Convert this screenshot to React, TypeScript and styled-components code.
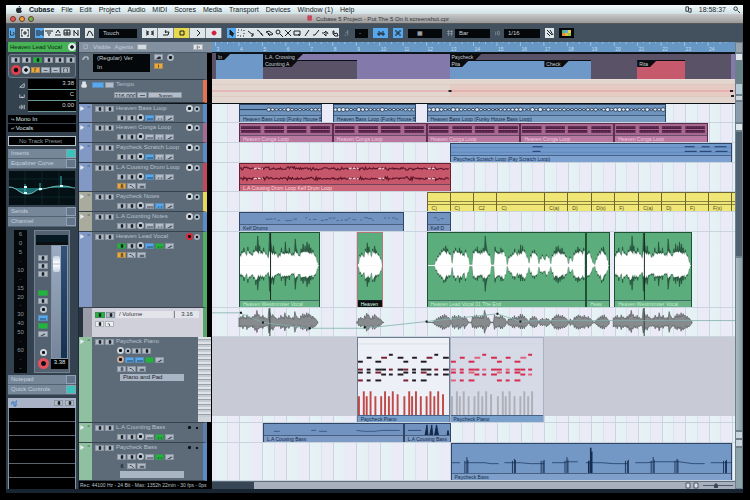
import React from "react";
import styled, { createGlobalStyle, css } from "styled-components";

/* ---------- palette ---------- */
const C = {
  slate: "#5d6b79",
  slateDark: "#43515f",
  key: "#b3bcc9",
  blue: "#7293bf",
  cyan: "#56a9ee",
  green: "#22b53c",
  clipGreen: "#5bad7c",
  red: "#c6576b",
  plum: "#a9698e",
  yellow: "#f0e676",
  ink: "#10161c",
};

const Global = createGlobalStyle`
  *, *::before, *::after { box-sizing: border-box; }
  body { margin: 0; background: #000; }
  body, button, input, select {
    font-family: "Liberation Sans", Arial, sans-serif;
    font-size: 6px;
    line-height: 7px;
  }
  button, input, select { margin: 0; padding: 0; border: 0; border-radius: 0; appearance: none; min-width: 0; }
  svg { display: block; }
`;

const Page = styled.div`
  min-height: 100vh;
  padding: 5px 7px 6px 6px;
  background: #000;
`;
const Win = styled.main`
  display: flex;
  flex-direction: column;
  background: #18242f;
  padding-bottom: 4px;
`;

/* ---------- menu bar and title ---------- */
const MenuBar = styled.nav`
  display: flex;
  align-items: center;
  gap: 7px;
  height: 9px;
  padding: 0 3px 0 10px;
  background: linear-gradient(#f4fafb, #cfe0e4);
  color: #20282c;
`;
const MenuItem = styled.button<{ $bold?: boolean }>`
  background: none;
  color: #14191c;
  font-size: 7px;
  line-height: 8px;
  font-weight: ${(p) => (p.$bold ? 700 : 400)};
`;
const Clock = styled.time`
  font-size: 7px;
  line-height: 8px;
`;
const Grow = styled.span`
  flex: 1;
`;
const TitleBar = styled.header`
  display: flex;
  align-items: center;
  gap: 3px;
  height: 10px;
  padding: 0 24px 0 4px;
  background: linear-gradient(#c9c9c9, #9a9a9a);
  border-bottom: 1px solid #55595c;
`;
const Light = styled.button<{ $c: string }>`
  width: 6px;
  height: 6px;
  border-radius: 50%;
  border: 1px solid #6b3a30;
  background: ${(p) => p.$c};
`;
const Title = styled.h1`
  flex: 1;
  margin: 0;
  display: flex;
  justify-content: center;
  gap: 3px;
  font-size: 6px;
  line-height: 8px;
  font-weight: 400;
  color: #33363a;
`;

/* ---------- toolbar ---------- */
const Toolbar = styled.div`
  display: flex;
  align-items: center;
  gap: 5px;
  height: 18px;
  padding: 0 3px;
  background: ${C.slateDark};
`;
const Group = styled.div`
  display: flex;
  background: #dfe6ea;
`;
const Tool = styled.button<{ $w: number; $bg?: string; $edge?: boolean }>`
  flex: none;
  width: ${(p) => p.$w}px;
  height: 10px;
  display: grid;
  place-items: center;
  background: ${(p) => p.$bg || "#dfe6ea"};
  ${(p) => p.$edge && css`border-right: 1px solid #7b8790;`}
`;
const DarkSelect = styled.select<{ $w: number }>`
  flex: none;
  width: ${(p) => p.$w}px;
  height: 9px;
  padding-left: 4px;
  background: #05080b;
  color: #c4ccd2;
  font-size: 6px;
`;

/* ---------- body ---------- */
const Body = styled.div`
  display: flex;
  align-items: stretch;
`;
const Inspector = styled.aside`
  flex: none;
  width: 73px;
  padding: 0 2px;
  display: flex;
  flex-direction: column;
  background: #34424f;
  border-right: 1px solid #202c37;
`;
const InsName = styled.div`
  display: flex;
  align-items: center;
  justify-content: space-between;
  height: 10px;
  padding-left: 2px;
  background: #46b155;
  color: #0b2c12;
  white-space: nowrap;
`;
const Strip = styled.div`
  display: grid;
  gap: 2px;
  margin: 2px 0 1px;
  padding: 2px;
  border: 1px solid #6c7b8a;
  border-radius: 3px;
  background: #46545f;
`;
const Line = styled.div<{ $gap?: number }>`
  display: flex;
  align-items: center;
  gap: ${(p) => p.$gap ?? 2}px;
`;
const Meter3 = styled.div`
  display: grid;
  grid-template-columns: 20px 1fr;
  align-items: center;
  color: #cfd6dc;
`;
const MeterIcon = styled.span`
  justify-self: end;
  padding-right: 3px;
`;
const MeterVal = styled.output`
  display: block;
  height: 11px;
  padding: 1px 2px;
  background: #000;
  border-bottom: 1px solid #6a9a98;
  text-align: right;
`;
const Routing = styled.div`
  display: grid;
  gap: 1px;
  margin: 3px 0 4px;
`;
const RouteSelect = styled.select`
  width: 100%;
  height: 8px;
  padding-left: 3px;
  background: #000;
  color: #dbe0e4;
  font-size: 6px;
`;
const Preset = styled.select`
  width: 100%;
  height: 10px;
  margin-bottom: 3px;
  padding-left: 10px;
  background: #000;
  border: 1px solid #b9c3cc;
  color: #8d979f;
  font-size: 6px;
`;
const Section = styled.button<{ $on?: boolean }>`
  display: flex;
  align-items: center;
  justify-content: space-between;
  width: 100%;
  height: 10px;
  padding: 0 0 0 3px;
  background: #76879a;
  border-bottom: 1px solid #556372;
  color: #c5cfda;
  &::after {
    content: "";
    width: 10px;
    height: 9px;
    background: ${(p) => (p.$on ? "#39c3ba" : "#64758a")};
    border: 1px solid #8fa0b2;
  }
`;
const Eq = styled.div`
  height: 34px;
  margin: 2px 1px;
  background: #041014;
`;
const Channel = styled.div`
  display: grid;
  grid-template-columns: 13px 36px;
  grid-template-rows: 100%;
  gap: 7px;
  height: 143px;
  margin: 3px 0 2px 6px;
`;
const Scale = styled.div`
  display: flex;
  flex-direction: column;
  justify-content: space-around;
  align-items: center;
  background: #05080b;
  color: #8d969d;
`;
const ChanPanel = styled.div`
  display: grid;
  grid-template-columns: 14px 1fr;
  grid-template-rows: 10px 1fr 10px;
  gap: 0 1px;
  padding: 4px 1px 3px 1px;
  background: #536170;
  border: 1px solid #738292;
`;
const Pan = styled.div`
  grid-column: 1 / -1;
  background: #071a24;
  border-bottom: 3px solid #0b0f12;
`;
const Stack = styled.div`
  grid-row: 2 / 4;
  display: flex;
  flex-direction: column;
  align-items: center;
  gap: 2px;
  padding-top: 10px;
`;
const FaderWrap = styled.div`
  display: grid;
  grid-template-columns: 9px 1fr;
  grid-template-rows: 100%;
  min-height: 0;
  background: linear-gradient(#33527a, #16304f);
  border: 1px solid #8597ab;
`;
const Fader = styled.input`
  writing-mode: vertical-lr;
  direction: rtl;
  width: 9px;
  height: 100%;
  background: linear-gradient(#9dacc0, #75869c);
  &::-webkit-slider-thumb {
    appearance: none;
    width: 7px;
    height: 16px;
    background: linear-gradient(#c4d0e2, #fff 45%, #8fa0b8 50%, #fff 55%, #c4d0e2);
    border-radius: 2px;
  }
`;
const FaderVal = styled.output`
  grid-column: 2;
  background: #000;
  color: #dfe4e8;
  text-align: center;
`;
const NotesHead = styled.div`
  display: flex;
  align-items: center;
  gap: 2px;
  height: 10px;
  margin-top: 3px;
  padding: 0 2px;
  background: #aab4c6;
`;
const Slots = styled.div`
  flex: 1;
  display: grid;
  grid-auto-rows: 14px;
  background: #000;
  border: solid #8593a4;
  border-width: 0 1px;
`;
const Slot = styled.div`
  border-bottom: 1px solid #59636c;
`;

/* ---------- small shared keys ---------- */
const Key = styled.button<{ $bg?: string; $w?: number }>`
  flex: none;
  width: ${(p) => p.$w ?? 9}px;
  height: 6px;
  display: grid;
  place-items: center;
  background: ${(p) => p.$bg || C.key};
  border: 1px solid rgba(90, 103, 116, 0.45);
  color: ${C.ink};
  overflow: hidden;
`;
const Round = styled.button<{ $c?: string; $s?: number }>`
  flex: none;
  width: ${(p) => p.$s ?? 7}px;
  height: ${(p) => p.$s ?? 7}px;
  border-radius: 50%;
  background: radial-gradient(circle, #0c1116 25%, ${(p) => p.$c || "#aab5c0"} 38%);
`;

/* ---------- track list ---------- */
const TrackList = styled.section`
  flex: none;
  width: 133px;
  background: #000;
`;
const ListHead = styled.div`
  display: flex;
  align-items: center;
  gap: 4px;
  height: 11px;
  padding: 0 9px 0 4px;
  background: #8290a0;
  border-bottom: 1px solid #4c5966;
  color: #c3ccd5;
`;
const TrackRow = styled.div<{ $h: number; $edge: string }>`
  display: flex;
  height: ${(p) => p.$h}px;
  margin-right: 5px;
  background: ${C.slate};
  border-right: 4px solid ${(p) => p.$edge};
  border-bottom: 1px solid #36424e;
`;
const KindTab = styled.div<{ $c: string }>`
  flex: none;
  display: flex;
  justify-content: space-between;
  width: 13px;
  padding: 2px 1px;
  background: ${(p) => p.$c};
  color: #23303c;
`;
const TrackMain = styled.div`
  flex: 1;
  min-width: 0;
  display: flex;
  flex-direction: column;
  gap: 2px;
  padding: 1px 3px 0 3px;
`;
const TrackName = styled.span`
  flex: 1;
  overflow: hidden;
  white-space: nowrap;
  padding-left: 1px;
  color: #b6c0ca;
`;
const Indent = styled.div`
  display: flex;
  align-items: center;
  gap: 1px;
  height: 7px;
  padding-left: 22px;
`;
const Patch = styled.select`
  width: 64px;
  height: 7px;
  margin-left: 25px;
  padding-left: 3px;
  background: #a9b5c3;
  color: #1b242c;
  font-size: 6px;
`;
const AutoRow = styled.div<{ $h: number }>`
  display: flex;
  height: ${(p) => p.$h}px;
  margin-right: 5px;
  padding-left: 4px;
  border-right: 4px solid #58a568;
  background: #26323f;
`;
const AutoMain = styled.div`
  flex: 1;
  display: flex;
  flex-direction: column;
  gap: 3px;
  padding: 3px 4px 0 3px;
  background: #cfd0da;
  border-left: 9px solid #9a9da8;
`;
const AutoSelect = styled.select`
  flex: 1;
  height: 7px;
  padding-left: 3px;
  background: #e4e5eb;
  color: #30363c;
  font-size: 6px;
`;
const AutoValue = styled.input`
  width: 25px;
  height: 7px;
  background: #e4e5eb;
  border-left: 1px solid #888;
  text-align: center;
  color: #30363c;
  font-size: 6px;
`;
const Piano = styled.div`
  flex: none;
  width: 13px;
  margin-right: -8px;
  border-bottom: 5px solid #cfd3da;
  background: repeating-linear-gradient(#dfe3e8 0 2px, #9aa2ac 2px 3px, #c5cbd2 3px 5px);
`;
const Status = styled.footer`
  height: 8px;
  padding: 1px;
  overflow: hidden;
  white-space: nowrap;
  color: #b9c0c6;
  font-size: 5px;
`;
const GlobalRow = styled.div<{ $h: number; $edge: string }>`
  display: flex;
  gap: 4px;
  height: ${(p) => p.$h}px;
  margin-right: 5px;
  padding: 1px 3px 0 2px;
  background: ${C.slate};
  border-right: 4px solid ${(p) => p.$edge};
  border-bottom: 1px solid #2c3844;
  color: #b8c2cc;
`;
const Col = styled.div<{ $gap?: number }>`
  display: flex;
  flex-direction: column;
  gap: ${(p) => p.$gap ?? 3}px;
`;

/* ---------- timeline ---------- */
const Timeline = styled.section`
  flex: 1;
  min-width: 0;
  background: repeating-linear-gradient(
    90deg,
    #ccd5de 0.67%, #ccd5de 0.86%,
    #e6f2f5 0.86%, #e4f0f3 2.9%,
    #dbe4ec 2.9%, #dbe4ec 3.05%,
    #eaebf6 3.05%, #eaebf6 5.16%
  );
`;
const Ruler = styled.div`
  height: 11px;
  background: #6797c4;
  border-bottom: 1px solid #101820;
`;
const Arranger = styled.div`
  height: 27px;
  background: #5a5368;
  border-bottom: 1px solid #e8dcd8;
`;
const Tempo = styled.div`
  height: 23px;
  background: #e2d6cf;
`;
const Divider = styled.div`
  height: 1px;
  background: #0b1218;
`;
const Lane = styled.div<{ $h: number; $cols: string; $bg?: string }>`
  display: grid;
  grid-template-columns: ${(p) => p.$cols};
  height: ${(p) => p.$h}px;
  background: ${(p) => p.$bg || "none"};
  border-bottom: 1px solid #c9d4de;
`;
const AutoLane = styled.div`
  height: 29px;
  border-bottom: 1px solid #c9d4de;
`;
const Clip = styled.article<{ $col: number; $bg: string; $line?: string }>`
  grid-column: ${(p) => p.$col};
  min-width: 0;
  display: flex;
  flex-direction: column;
  background: ${(p) => p.$bg};
  border: 1px solid ${(p) => p.$line || "#2f4666"};
  border-bottom-width: 0;
  overflow: hidden;
`;
const ClipArt = styled.div`
  flex: 1;
  min-height: 0;
`;
const ClipName = styled.span<{ $c?: string; $bg?: string }>`
  flex: none;
  height: 7px;
  padding-left: 3px;
  overflow: hidden;
  white-space: nowrap;
  border-top: 1px solid rgba(20, 35, 60, 0.5);
  background: ${(p) => p.$bg || "rgba(255,255,255,0.08)"};
  color: ${(p) => p.$c || "#172a44"};
  font-size: 5px;
  line-height: 6px;
`;
const Chord = styled.div<{ $col: number }>`
  grid-column: ${(p) => p.$col};
  min-width: 0;
  overflow: hidden;
  background: ${C.yellow};
  border: solid #6c6630;
  border-width: 1px 0 0 1px;
`;
const ChordTop = styled.div`
  height: 12px;
  background: linear-gradient(transparent 8px, #8b853f 8px 9px, transparent 9px 11px, #8b853f 11px);
`;
const ChordName = styled.span`
  display: block;
  height: 6px;
  padding-left: 4px;
  font-size: 5px;
  line-height: 6px;
  color: #4e4a22;
`;
const MarkLane = styled.div<{ $cols: string; $h: number }>`
  display: grid;
  grid-template-columns: ${(p) => p.$cols};
  height: ${(p) => p.$h}px;
`;
const Mark = styled.div<{ $col: number; $bg: string; $plain?: boolean }>`
  grid-column: ${(p) => p.$col};
  min-width: 0;
  background: ${(p) => p.$bg};
  border-top: ${(p) => (p.$plain ? "0" : "1px solid #0c0f16")};
`;
const Flag = styled.span`
  display: block;
  width: fit-content;
  height: 6px;
  padding: 0 8px 0 2px;
  background: #0a0c10;
  clip-path: polygon(0 0, 100% 0, calc(100% - 6px) 100%, 0 100%);
  color: #c9ced6;
  font-size: 5px;
  line-height: 6px;
  white-space: nowrap;
`;
const HScroll = styled.div`
  display: flex;
  justify-content: flex-end;
  align-items: center;
  height: 8px;
  background: linear-gradient(90deg, #364654 0 8%, #a8b0be 8%);
  border-top: 1px solid #5f6e7d;
`;
const VScroll = styled.div`
  flex: none;
  display: flex;
  flex-direction: column;
  width: 8px;
  background: #51626f;
`;
const Thumb = styled.div<{ $h: number; $bg: string }>`
  height: ${(p) => p.$h}px;
  background: ${(p) => p.$bg};
  border: 1px solid #6f808d;
`;
const Rest = styled.div`
  flex: 1;
  background: linear-gradient(90deg, #a9bcc2, #8ba0a9);
  border: 1px solid #6f808d;
`;

/* ---------- timeline geometry ---------- */
const START = 212;
const SPAN = 524;

/* Fractional column template: a gap and a clip track for every range. */
function columns(ranges: number[][]): string {
  let at = START;
  const out: string[] = [];
  ranges.forEach(([s, e]) => {
    out.push(`minmax(0, ${s - at}fr)`, `minmax(0, ${e - s}fr)`);
    at = e;
  });
  out.push(`minmax(0, ${START + SPAN - at}fr)`);
  return out.join(" ");
}

function Art({ w, h, children }: { w: number; h: number; children: React.ReactNode }) {
  return (
    <svg width="100%" height="100%" viewBox={`0 0 ${w} ${h}`} preserveAspectRatio="none" aria-hidden="true">
      {children}
    </svg>
  );
}

const rnd = (i: number) => {
  const v = Math.sin(i * 127.1 + 11.7) * 43758.5453;
  return v - Math.floor(v);
};

/* Peaks sampled every two units. */
const VERSE = [12, 15, 18, 13, 19, 14, 12, 16, 20, 30, 20, 15, 18, 13, 10, 34, 18, 20, 14, 10, 12, 18, 14, 24, 15, 18, 12, 13, 27, 15, 11, 17, 22, 20, 24, 22, 18, 16, 11, 4];
const SHORT = [2, 11, 13, 10, 17, 23, 19, 11, 17, 20, 15, 12, 8, 1];
const LONG = [
  0, 0, 0, 1, 6, 10, 13, 16, 18, 20, 17, 13, 3, 15, 18, 15, 18, 15, 12, 16, 10, 1, 1, 15, 17, 19, 15, 16, 18, 30, 15, 12, 1, 1,
  19, 15, 14, 18, 16, 11, 1, 9, 11, 13, 17, 13, 16, 21, 20, 16, 10, 3, 11, 15, 16, 12, 2, 8, 11, 7, 11, 9, 2, 11, 15, 19, 20, 17, 18,
  14, 10, 2, 9, 5, 13, 16, 19, 17, 15, 18, 13, 15, 10, 3, 1, 7, 12, 15, 18, 19, 13, 6,
];

function wave(peaks: number[], mid: number, k: number, x0 = 0, low = 0.5): string {
  const up: string[] = [];
  const down: string[] = [];
  peaks.forEach((p, i) => {
    [0, 1].forEach((j) => {
      const x = x0 + i * 2 + j;
      const n = j ? low + 0.25 * rnd(i + p) : 1;
      up.push(`${x},${(mid - p * k * n).toFixed(1)}`);
      down.unshift(`${x},${(mid + p * k * n * (0.75 + 0.25 * rnd(i * 3))).toFixed(1)}`);
    });
  });
  return up.concat(down).join(" ");
}
const core = (peaks: number[]) => peaks.map((p, i) => Math.min(p * 0.85, 12 + 3 * rnd(i)));

function Vocal({ peaks, w, cut }: { peaks: number[]; w: number; cut?: number }) {
  return (
    <Art w={w} h={68}>
      <polygon points={wave(peaks, 33, 1)} fill="#2f6148" stroke="#1c3c2c" strokeWidth="0.5" />
      <polygon points={wave(core(peaks), 33, 1, 0, 0.75)} fill="#fff" stroke="#fff" strokeWidth="0.4" />
      <path d={`M0 33H${w}`} stroke="#f4f8f4" />
      {cut && <path d={`M${cut} 0V68`} stroke="#16251d" />}
    </Art>
  );
}

function LoopWave({ w, from = 0 }: { w: number; from?: number }) {
  const cells = [];
  for (let x = from; x < w; x += 4) {
    const r = rnd(x);
    cells.push(<ellipse key={x} cx={x + 1.5} cy={5.5} rx={1.2 + r} ry={1 + r * 1.4} fill="#dfe9f2" stroke="#182c48" strokeWidth="0.8" />);
  }
  return (
    <Art w={w} h={12}>
      <path d={`M0 5.5H${w}`} stroke="#182c48" strokeWidth="1" />
      {cells}
    </Art>
  );
}

function CongaWave() {
  return (
    <Art w={94} h={12}>
      {[0, 24, 47, 71].map((x) => (
        <g key={x}>
          <path d={`M${x + 1} 4h20M${x + 1} 8h20`} stroke="#4a1d40" strokeWidth="3" />
          <path d={`M${x + 1} 4h20M${x + 1} 8h20`} stroke="#8d4f78" strokeWidth="0.5" strokeDasharray="2 1" />
        </g>
      ))}
    </Art>
  );
}

function DrumWave() {
  const pts = (y: number) => {
    let d = `M0 ${y}`;
    for (let x = 1; x < 212; x += 1) d += `L${x} ${(y + (rnd(x * y) - 0.5) * (x % 24 < 8 ? 4 : 2)).toFixed(1)}`;
    return d;
  };
  return (
    <Art w={212} h={22}>
      {[5, 16].map((y) => (
        <g key={y} fill="none">
          <path d={pts(y)} stroke="#5c1528" strokeWidth="1.2" />
          <path d={`M14 ${y}h9M110 ${y}h10M140 ${y}h6M190 ${y}h8`} stroke="#f1c8cd" strokeWidth="1.5" strokeDasharray="3 1" />
        </g>
      ))}
    </Art>
  );
}

function MidiDots({ w, h, seed }: { w: number; h: number; seed: number }) {
  const marks = [];
  for (let x = Math.min(22, w / 4); x < w - 6; x += 4) {
    const r = rnd(x + seed);
    if (r > 0.25) marks.push(<path key={x} d={`M${x} ${h * (0.4 + 0.3 * rnd(x * 2 + seed))}h${1 + r * 3}`} stroke="#33517d" strokeWidth="0.7" />);
  }
  return <Art w={w} h={h}>{marks}</Art>;
}

const NOTES: number[][] = [
  [32, 17, 4], [9, 20, 5], [24, 20, 6], [41, 20, 6], [0, 24, 5], [18, 24, 6],
  [0, 32, 5], [9, 32, 4], [18, 32, 6], [24, 32, 5], [32, 32, 4], [41, 32, 6],
  [0, 35, 5], [9, 35, 4], [18, 35, 6], [24, 37, 5], [32, 37, 4], [41, 37, 6],
  [0, 43, 5], [9, 43, 4], [18, 43, 6],
];
const HITS: number[][] = [[1, 19], [6, 24], [9, 19], [13, 24], [18, 19], [24, 19], [28, 24], [32, 19], [36, 24], [41, 21]];

function PianoPart({ color, alt, bar, w, end }: { color: string; alt: string; bar: string; w: number; end: number }) {
  return (
    <Art w={w} h={78}>
      <path d={`M0 6H${w}`} stroke="#cfd2e0" strokeWidth="0.6" />
      {[0, 47].map((dx) => (
        <g key={dx}>
          {NOTES.filter((n) => n[0] + dx < end).map(([x, y, l], i) => (
            <rect key={i} x={x + dx} y={y - 1} width={l} height="2" fill={i % 4 === 2 ? alt : color} />
          ))}
          {HITS.filter((n) => n[0] + dx < end).map(([x, l]) => (
            <rect key={x} x={x + dx - 1} y={78 - l} width="2" height={l} fill={bar} />
          ))}
        </g>
      ))}
    </Art>
  );
}

function BassPart() {
  return (
    <Art w={282} h={31}>
      <path d="M0 20h8m5 0h20l6 1h8m6-1h16l10 1h14m8-1h12l4-1h10m8 1h16l12 1h14m8-1h12l8-1h24l14 2h12m6-1h18l16-2h12" stroke="#1d3a62" strokeWidth="0.8" fill="none" />
      {[15, 63, 92, 116, 140, 177, 203, 227, 276].map((x, i) => (
        <path key={x} d={`M${x} 31V${i === 4 ? 4 : 14 + (i % 3) * 2}M${x - 2} 31V18M${x + 1} 31V${i === 4 ? 8 : 17}`} stroke="#152c50" strokeWidth={i === 4 ? 1.6 : 0.9} />
      ))}
    </Art>
  );
}

/* ---------- composed pieces ---------- */
function Glyph({ d, fill, s = 8, c = "#1a2025" }: { d: string; fill?: boolean; s?: number; c?: string }) {
  return (
    <svg width={s} height={s} viewBox="0 0 8 8" fill={fill ? c : "none"} stroke={c} strokeWidth="1" aria-hidden="true">
      <path d={d} />
    </svg>
  );
}
const Pip = () => <Glyph s={4} fill d="M2 1h4v6H2z" />;

const VIEW_TOOLS = [
  ["Inspector", "M1 1v6M3 1v6M5 2v4M7 1v6"],
  ["Infoline", "M0 2h8M2 4h4M3 6h2"],
  ["Overview", "M1 6h6M2 4l2-3 2 3"],
  ["Pool", "M1 1h6v5H1zM1 4h6M4 1v5"],
  ["Mixer", "M2 1v6M2 2l4 4M6 1v6"],
];
const EDIT_TOOLS = [
  ["Object selection", "M2 1l4 4H4l1 2-1 0-1-2-1 1z"],
  ["Range", "M1 1h1M4 1h1M7 1v1M7 4v1M7 7h-1M4 7h-1M1 7v-1M1 4v-1"],
  ["Split", "M1 2l5 4M6 4v3H4"],
  ["Glue", "M1 1l2 1 3 4M5 4l2 3"],
  ["Erase", "M1 3l3-1 4 3-2 1zM3 5l2 2"],
  ["Zoom", "M5 5l3 3M1 3a2 2 0 1 0 4 0a2 2 0 1 0-4 0"],
  ["Mute", "M1 1l6 6M7 1L1 7"],
  ["Time warp", "M1 2h6v4H1zM5 5l2 2"],
  ["Draw", "M6 1L2 7"],
  ["Line", "M1 6l2 0 4-5"],
  ["Play", "M1 4h2l2-2v5L3 5M6 3l1 2"],
  ["Color", "M2 5V2h1v3l3-1 1 3H4z"],
];
const TRANSPORT: [string, string, string?, string?][] = [
  ["Locators", "M0 1v6M2 2v4l-1-2zM6 2v4l1-2zM8 1v6"],
  ["Cycle", "M1 6h5l1-3H3M4 1L3 3l1 1"],
  ["Stop", "M2 2h4v4H2z", "#e8da4c"],
  ["Start", "M3 1l3 3-3 3"],
  ["Record", "M4 2a2 2 0 1 0 0.1 0z", undefined, "#d31c3c"],
];

function TrackKeys({ on, blueAt = 0 }: { on?: boolean; blueAt?: number }) {
  return (
    <Indent>
      <Key aria-label="Read automation" $bg={on ? C.green : undefined}><Pip /></Key>
      <Key aria-label="Write automation"><Pip /></Key>
      <Round aria-label="Edit channel" $c="#b9c3cc" />
      <Key aria-label="Inserts" $bg={blueAt === 0 ? C.cyan : undefined}><Glyph s={6} d="M0 4h8" /></Key>
      <Key aria-label="Equalizer" $bg={on || blueAt === 2 ? C.green : blueAt === 1 ? C.cyan : undefined}><Glyph s={6} d="M1 4h2M5 4h2" /></Key>
      <Key aria-label="Sends"><Glyph s={6} d="M1 5h3V3h3" /></Key>
    </Indent>
  );
}

function ExtraKeys({ first = "#eda83c" }: { first?: string }) {
  return (
    <Indent>
      <Key aria-label="Musical timebase" $bg={first}><Glyph s={6} d="M3 6V1h2v5" /></Key>
      <Key aria-label="Lane display"><Glyph s={6} d="M1 2h2l4 4" /></Key>
      <Key aria-label="Freeze"><Glyph s={6} d="M1 3h6M1 5h6" /></Key>
    </Indent>
  );
}

function Track(p: {
  name: string; h: number; edge: string; tab: string; armed?: boolean; extra?: boolean; blueAt?: number; piano?: boolean; patch?: string; midi?: boolean;
}) {
  return (
    <TrackRow $h={p.h} $edge={p.edge}>
      <KindTab $c={p.tab}>
        <Glyph s={5} c="#e8eef4" fill d="M1 1l5 3-5 3z" />
        <Glyph s={4} d="M1 2h5" />
      </KindTab>
      <TrackMain>
        <Line $gap={1}>
          <Key aria-label={`Mute ${p.name}`}><Pip /></Key>
          <Key aria-label={`Solo ${p.name}`}><Pip /></Key>
          <TrackName>{p.name}</TrackName>
          {!p.piano && <Round aria-label={`Record ${p.name}`} $c={p.armed ? "#e0283a" : p.midi ? C.slate : "#ccd4db"} />}
          {!p.piano && <Round aria-label={`Monitor ${p.name}`} $s={6} $c={p.midi ? C.slate : "#a3b0bc"} />}
        </Line>
        {p.piano && (
          <Indent>
            <Round aria-label="Record Paycheck Piano" $c="#ccd4db" />
            <Round aria-label="Monitor Paycheck Piano" $s={6} />
            <Key aria-label="Read"><Pip /></Key>
            <Key aria-label="Write"><Pip /></Key>
          </Indent>
        )}
        {p.piano ? (
          <Indent>
            <Round aria-label="Edit instrument" $c="#c7a998" />
            <Key aria-label="Instrument" $bg={C.cyan}><Glyph s={6} d="M0 4h8" /></Key>
            <Key aria-label="Inserts" $bg={C.cyan}><Glyph s={6} d="M0 4h8" /></Key>
            <Key aria-label="Equalizer" $bg={C.green} />
            <Key aria-label="Sends"><Glyph s={6} d="M1 5h3V3h3" /></Key>
          </Indent>
        ) : (
          <TrackKeys on={p.armed} blueAt={p.blueAt} />
        )}
        {p.extra && <ExtraKeys first={p.midi ? C.slate : p.piano ? C.key : undefined} />}
        {p.patch !== undefined && (
          <Patch aria-label={`${p.name} program`}><option>{p.patch}</option></Patch>
        )}
      </TrackMain>
      {p.piano && <Piano />}
    </TrackRow>
  );
}

const TAB = { audio: "#8199c4", midi: "#8fc0a0", inst: "#a9ab9c" };
const CHORDS: [number, number, string][] = [
  [427, 450, "C)"], [450, 474, "C)"], [474, 497, "C2"], [497, 545, "C)"], [545, 568, "C(a)"], [568, 592, "D)"], [592, 615, "D(s)"],
  [615, 639, "F)"], [639, 662, "C(a)"], [662, 686, "D)"], [686, 709, "F)"], [709, 732, "F(s)"], [732, 736, ""],
];

function RulerMarks() {
  const items = [];
  for (let n = 3; n <= 24; n += 1) {
    const x = (n - 4) * 23.5 + 27;
    items.push(
      <g key={n}>
        <path d={`M${x} 0v4M${x + 6} 0v1M${x + 12} 0v2M${x + 18} 0v1`} stroke="#b7d3ea" strokeWidth="0.7" />
        <text x={x + 1} y="9" fontSize="5" fill="#c6def0">{n}</text>
      </g>,
    );
  }
  return <Art w={SPAN} h={10}>{items}</Art>;
}

const BASS: [number, number, number, string][] = [
  [239, 322, 28, "Heaven Bass Loop (Funky House B"],
  [333, 416, 0, "Heaven Bass Loop (Funky House B"],
  [427, 667, 0, "Heaven Bass Loop (Funky House Bass Loop)"],
];
const CONGA = [239, 333, 427, 521, 615];

export default function App() {
  return (
    <Page>
      <Global />
      <Win>
        <MenuBar aria-label="Main menu">
          <svg width="6" height="7" viewBox="0 0 12 14" fill="#262c30" aria-hidden="true">
            <path d="M8 0c0 2-1 3-3 3 0-2 1-3 3-3zM6 4c1 0 2-1 3-1s2 .5 2.5 1.5C9 6 9.5 9 12 10c-1 2-2 4-3.5 4C7.5 14 7 13.5 6 13.5S4.5 14 3.500 14C1.500 14 0 10.500 0 8s1.500-4.500 3.500-4.500C4.500 3.500 5 4 6 4z" />
          </svg>
          <MenuItem $bold>Cubase</MenuItem>
          {["File", "Edit", "Project", "Audio", "MIDI", "Scores", "Media", "Transport", "Devices", "Window (1)", "Help"].map((m) => (
            <MenuItem key={m}>{m}</MenuItem>
          ))}
          <Grow />
          <Glyph s={7} d="M1 1h3v5H1zM5 3h2v4H4" />
          <Clock>18:58:37</Clock>
          <Glyph s={7} d="M5 5l3 3M1 3a2 2 0 1 0 4 0a2 2 0 1 0-4 0" />
        </MenuBar>
        <TitleBar>
          <Light $c="#e8574a" aria-label="Close" />
          <Light $c="#efa437" aria-label="Minimize" />
          <Light $c="#6cb84a" aria-label="Zoom window" />
          <Title>
            <Glyph s={6} c="#c8455a" fill d="M1 1h5v6H1z" />
            Cubase 5 Project - Put The 5 On It screenshot.cpr
          </Title>
        </TitleBar>
        <Toolbar role="toolbar" aria-label="Project tools">
          <Tool $w={6} $bg={C.cyan} aria-label="Activate project"><Glyph s={6} d="M2 1v6h3a2 2 0 0 0 0-4" /></Tool>
          <Tool $w={10} aria-label="Constrain delay"><Glyph d="M2 1H0v6h2M6 1h2v6H6M3 3h2v2H3z" /></Tool>
          <Group>
            {VIEW_TOOLS.map(([n, d], i) => <Tool key={n} $w={9} $bg={i ? undefined : C.cyan} aria-label={n}><Glyph d={d} /></Tool>)}
          </Group>
          <Tool $w={9} aria-label="Automation follows events"><Glyph d="M1 7l2-5 2 1 2 4" /></Tool>
          <DarkSelect $w={38} aria-label="Automation mode"><option>Touch</option></DarkSelect>
          <Group>
            {TRANSPORT.map(([n, d, bg, c]) => (
              <Tool key={n} $w={16} $bg={bg} $edge aria-label={n}><Glyph d={d} c={c} fill={!!c} /></Tool>
            ))}
          </Group>
          <Group>
            {EDIT_TOOLS.map(([n, d], i) => <Tool key={n} $w={i % 3 === 1 ? 10 : 9} $bg={i ? undefined : C.cyan} aria-label={n}><Glyph d={d} fill={!i} /></Tool>)}
          </Group>
          <Glyph s={6} c="#8d9aa6" d="M5 0v7M2 4l3-2M1 7h2" />
          <DarkSelect $w={13} aria-label="Nudge"><option>-</option></DarkSelect>
          <Tool $w={15} $bg={C.cyan} aria-label="Autoscroll"><Glyph d="M0 5h8M2 2v5M6 2v5M4 3v2" /></Tool>
          <Tool $w={10} $bg={C.cyan} aria-label="Snap"><Glyph d="M1 2h2M5 2h2M1 6h2M5 6h2M3 3h2v2H3z" /></Tool>
          <DarkSelect $w={34} aria-label="Snap type"><option>&nbsp;&nbsp;&nbsp;▦</option></DarkSelect>
          <Line $gap={2}>
            <Glyph s={6} c="#8d9aa6" d="M0 2h8M0 5h8M2 0v8M6 0v8" />
            <DarkSelect $w={35} aria-label="Grid type"><option>Bar</option></DarkSelect>
          </Line>
          <Line $gap={4}>
            <Glyph s={5} c="#8d9aa6" d="M1 1v6M4 1h3v5H4z" />
            <DarkSelect $w={36} aria-label="Quantize"><option>1/16</option></DarkSelect>
          </Line>
          <Tool $w={9} aria-label="Snap to zero crossing"><Glyph d="M1 1l5 5M4 1l3 5M1 4l3 3" /></Tool>
          <Tool $w={15} $bg="#05080b" aria-label="Event colors">
            <svg width="9" height="6" viewBox="0 0 9 6" aria-hidden="true">
              <path d="M0 0h3v3H0z" fill="#4fbf6a" /><path d="M3 0h3v3H3z" fill="#6ba4e8" /><path d="M6 0h3v3H6z" fill="#e8d24a" />
              <path d="M0 3h3v3H0z" fill="#e88b3a" /><path d="M3 3h3v3H3z" fill="#d8c23a" /><path d="M6 3h3v3H6z" fill="#9cc24a" />
            </svg>
          </Tool>
        </Toolbar>

        <Body>
          <Inspector>
            <InsName>Heaven Lead Vocal <Round aria-label="Edit channel settings" $s={8} $c="#dfe6ea" /></InsName>
            <Strip>
              <Line $gap={2}>
                {["Mute", "Solo", "Read", "Write", "Open", "Lane"].map((n) => (
                  <Key key={n} aria-label={n} $bg={n === "Read" ? C.green : undefined}><Pip /></Key>
                ))}
              </Line>
              <Line $gap={1}>
                <Round aria-label="Record enable" $s={10} $c="#e2404f" />
                <Round aria-label="Monitor" $s={8} $c="#c9d1d8" />
                <Key aria-label="Timebase" $bg="#eda83c"><Glyph s={5} d="M3 7V1h2" /></Key>
                <Key aria-label="Lock"><Glyph s={5} d="M1 4h6" /></Key>
                <Key aria-label="Lanes"><Glyph s={5} d="M1 4h6" /></Key>
                <Key aria-label="Freeze"><Glyph s={5} d="M3 1H1v6h2M5 1h2v6H5" /></Key>
              </Line>
            </Strip>
            {[["M1 7h6V2z", "3.38"], ["M1 2v4h6V2M4 4v2", "C"], ["M1 3v3M3 1v6M5 2v4M7 1v6", "0.00"]].map(([d, v]) => (
              <Meter3 key={v}><MeterIcon><Glyph s={6} c="#d5dce2" d={d} /></MeterIcon><MeterVal>{v}</MeterVal></Meter3>
            ))}
            <Routing>
              <RouteSelect aria-label="Input routing"><option>⤷ Mono In</option></RouteSelect>
              <RouteSelect aria-label="Output routing"><option>⤶ Vocals</option></RouteSelect>
            </Routing>
            <Preset aria-label="Track preset"><option>No Track Preset</option></Preset>
            <Section $on>Inserts</Section>
            <Section>Equalizer Curve</Section>
            <Eq>
              <Art w={66} h={34}>
                <path d="M0 8h66M0 26h66M16 0v34M33 0v34M50 0v34" stroke="#12343a" strokeWidth="0.6" />
                <path d="M0 16c8 0 10 7 18 7s8-5 14-5 10-3 20-3 10 2 14 2L66 17H0z" fill="#1d6b70" />
                <path d="M0 16c8 0 10 7 18 7s8-5 14-5 10-3 20-3 10 2 14 2" fill="none" stroke="#8be0dc" strokeWidth="0.8" />
                <path d="M16 13v10M31 12v8M52 5v11" stroke="#35b8b4" />
                <path d="M15 16h3M15 22h3M30 18h3M51 15h3" stroke="#d9ffff" strokeWidth="2" />
              </Art>
            </Eq>
            <Section>Sends</Section>
            <Section>Channel</Section>
            <Channel>
              <Scale>{["6", "0", "5", "", "10", "", "15", "20", "", "30", "40", "50", "", "60", "", "-"].map((n, i) => <span key={i}>{n || "·"}</span>)}</Scale>
              <ChanPanel>
                <Pan />
                <Stack>
                  {["Mute channel", "Solo channel", "Listen"].map((n) => <Key key={n} $w={10} aria-label={n}><Pip /></Key>)}
                  <Grow />
                  <Key $w={10} $bg={C.green} aria-label="Channel read" />
                  <Key $w={10} aria-label="Channel write"><Pip /></Key>
                  <Round aria-label="Channel editor" $c="#b9c3cc" />
                  <Key $w={10} $bg={C.cyan} aria-label="Channel inserts"><Glyph s={6} d="M0 4h8" /></Key>
                  <Key $w={10} $bg={C.green} aria-label="Channel equalizer" />
                  <Key $w={10} aria-label="Channel sends"><Glyph s={6} d="M1 5h3V3h3" /></Key>
                  <Grow />
                  <Round aria-label="Channel monitor" $c="#d2d9df" />
                  <Round aria-label="Channel record" $s={11} $c="#e5505c" />
                </Stack>
                <FaderWrap>
                  <Fader type="range" aria-label="Channel level" min={0} max={100} defaultValue={90} />
                </FaderWrap>
                <FaderVal>3.38</FaderVal>
              </ChanPanel>
            </Channel>
            <Section>Notepad</Section>
            <Section $on>Quick Controls</Section>
            <NotesHead>
              <Glyph s={8} c="#2d74c8" d="M1 5h1V3h2v4h2V2h1" />
              <Grow />
              <Key aria-label="Quick read"><Pip /></Key>
              <Key aria-label="Quick write"><Pip /></Key>
            </NotesHead>
            <Slots>{[1, 2, 3, 4, 5].map((n) => <Slot key={n} />)}</Slots>
          </Inspector>

          <TrackList aria-label="Tracks">
            <ListHead>
              <Glyph s={6} c="#a8b4c0" d="M1 1h5v5H1z" />
              <span>Visible</span><span>Agents</span>
              <Key aria-label="Track types" $w={10} $bg="#d3dae0" />
              <Grow />
              <Key aria-label="Divide track list" $w={10} $bg="#e3e8ec"><Glyph s={5} d="M2 1v6M5 2v3" /></Key>
            </ListHead>
            <GlobalRow $h={27} $edge={C.slate}>
              <Glyph s={8} c="#cdd5dc" d="M1 5h2V3h4v3" />
              <Col $gap={0}>
                <DarkSelect $w={57} aria-label="Arranger chain"><option>(Regular) Ver</option></DarkSelect>
                <DarkSelect $w={57} aria-label="Arranger step"><option>In</option></DarkSelect>
              </Col>
              <Col>
                <Key aria-label="Edit arranger"><Glyph s={5} fill d="M1 6h6V3H4z" /></Key>
                <Key aria-label="Arranger mode" $bg="#eda83c"><Glyph s={5} d="M4 1v5" /></Key>
              </Col>
              <Round aria-label="Arranger bypass" />
            </GlobalRow>
            <GlobalRow $h={23} $edge="#e4734f">
              <Glyph s={7} c="#dfe5ea" fill d="M2 1h3v3h1v3H1V4h1z" />
              <Col>
                <Line $gap={1}><Key aria-label="Tempo active" $bg={C.cyan} $w={12} /><Key aria-label="Tempo mode" /><TrackName>Tempo</TrackName></Line>
                <Indent><Key $w={22} aria-label="Tempo value">116.000</Key><Key $w={10} aria-label="Tempo zoom"><Glyph s={5} d="M0 4h8" /></Key><Key $w={34} aria-label="Curve type">Jump</Key></Indent>
              </Col>
            </GlobalRow>
            <Divider />
            <Track name="Heaven Bass Loop" h={19} edge="#5b8cc6" tab={TAB.audio} />
            <Track name="Heaven Conga Loop" h={20} edge="#a86a93" tab={TAB.audio} blueAt={3} />
            <Track name="Paycheck Scratch Loop" h={20} edge="#5b8cc6" tab={TAB.audio} />
            <Track name="L.A Cousing Drum Loop" h={29} edge="#c4485a" tab={TAB.audio} extra />
            <Track name="Paycheck Notes" h={20} edge="#e6da58" tab={TAB.inst} blueAt={1} />
            <Track name="L.A Counting Notes" h={20} edge="#5b8cc6" tab={TAB.inst} blueAt={3} />
            <Track name="Heaven Lead Vocal" h={76} edge="#4fae62" tab={TAB.audio} armed extra />
            <AutoRow $h={29}>
              <AutoMain>
                <Line $gap={1}>
                  <Key aria-label="Read volume" $bg={C.green} $w={10}><Pip /></Key>
                  <Key aria-label="Write volume"><Pip /></Key>
                  <AutoSelect aria-label="Automation parameter"><option>/ Volume</option></AutoSelect>
                  <AutoValue aria-label="Automation value" defaultValue="3.16" />
                </Line>
                <Line $gap={1}>
                  <Key aria-label="Mute automation" $bg="#f0f1f5"><Pip /></Key>
                  <Key aria-label="Lock automation" $bg="#f0f1f5"><Glyph s={5} d="M1 3h3v4h3" /></Key>
                </Line>
              </AutoMain>
            </AutoRow>
            <Track name="Paycheck Piano" h={86} edge={C.slate} tab={TAB.midi} piano extra patch="Piano and Pad" />
            <Track name="L.A Counting Bass" h={20} edge="#5d7ea8" tab={TAB.midi} midi blueAt={2} />
            <Track name="Paycheck Bass" h={38} edge="#5b8cc6" tab={TAB.midi} midi blueAt={2} extra patch="" />
            <Status>Rec: 44100 Hz - 24 Bit - Max: 1352h 22min - 30 fps - 0ps</Status>
          </TrackList>

          <Timeline aria-label="Arrangement">
            <Ruler><RulerMarks /></Ruler>
            <Arranger>
              <MarkLane $h={7} $cols={columns([[216, 263], [263, 450], [450, 732], [732, 736]])}>
                <Mark $col={2} $bg="#6d98c8"><Flag>In</Flag></Mark>
                <Mark $col={4} $bg="#8479ab"><Flag>L.A. Crossing</Flag></Mark>
                <Mark $col={6} $bg="#5a5368"><Flag>Paycheck</Flag></Mark>
                <Mark $col={8} $bg="#8479ab" />
              </MarkLane>
              <MarkLane $h={19} $cols={columns([[216, 263], [263, 357], [357, 450], [450, 545], [545, 592], [638, 686], [732, 736]])}>
                <Mark $col={2} $bg="#6d98c8" $plain />
                <Mark $col={4} $bg="#5a5368"><Flag>Counting A</Flag></Mark>
                <Mark $col={6} $bg="#8479ab" $plain />
                <Mark $col={8} $bg="#6d98c8"><Flag>Pita</Flag></Mark>
                <Mark $col={10} $bg="#6d98c8"><Flag>Check</Flag></Mark>
                <Mark $col={12} $bg="#c65a6c"><Flag>Rita</Flag></Mark>
                <Mark $col={14} $bg="#8479ab" $plain />
              </MarkLane>
            </Arranger>
            <Tempo>
              <Art w={SPAN} h={23}>
                <rect x="238" y="4" width="286" height="13" fill="#eac2bd" opacity="0.6" />
                <path d={`M0 4.5H${SPAN}M0 16.5H${SPAN}`} stroke="#d8c4c0" strokeWidth="0.6" />
                <path d={`M0 11H${SPAN}`} stroke="#e69a9c" />
                <path d="M237 11h3M519 11h3M520 16h3" stroke="#20242a" strokeWidth="2" />
              </Art>
            </Tempo>
            <Divider />

            <Lane $h={19} $cols={columns(BASS.map((b) => [b[0], b[1]]))}>
              {BASS.map(([s, e, from, label], i) => (
                <Clip key={s} $col={i * 2 + 2} $bg="#6e94bd">
                  <ClipArt><LoopWave w={e - s} from={from} /></ClipArt>
                  <ClipName>{label}</ClipName>
                </Clip>
              ))}
            </Lane>
            <Lane $h={20} $cols={columns(CONGA.map((s) => [s, s + 94]))}>
              {CONGA.map((s, i) => (
                <Clip key={s} $col={i * 2 + 2} $bg={C.plum} $line="#5c2f50">
                  <ClipArt><CongaWave /></ClipArt>
                  <ClipName $c="#f0c8de" $bg="#b878a0">Heaven Conga Loop</ClipName>
                </Clip>
              ))}
            </Lane>
            <Lane $h={20} $cols={columns([[450, 733]])}>
              <Clip $col={2} $bg="#7299cc">
                <ClipArt>
                  <Art w={282} h={12}>
                    <path d="M0 4h282M0 9h282" stroke="#557cae" strokeWidth="0.6" />
                    <path d="M82 3h10M82 8h8M235 3h10M252 3h8M265 3h12M235 8h12M250 8h12M266 8h12" stroke="#1b3560" />
                  </Art>
                </ClipArt>
                <ClipName>Paycheck Scratch Loop (Pay Scratch Loop)</ClipName>
              </Clip>
            </Lane>
            <Lane $h={29} $cols={columns([[239, 451]])}>
              <Clip $col={2} $bg={C.red} $line="#6d1f30">
                <ClipArt><DrumWave /></ClipArt>
                <ClipName $c="#fbdde0">L.A Cousing Drum Loop Kelf Drum Loop</ClipName>
              </Clip>
            </Lane>
            <Lane $h={20} $cols={columns(CHORDS.map((c) => [c[0], c[1]]))}>
              {CHORDS.map(([s, , label], i) => (
                <Chord key={s} $col={i * 2 + 2}><ChordTop /><ChordName>{label}</ChordName></Chord>
              ))}
            </Lane>
            <Lane $h={20} $cols={columns([[239, 404], [427, 451]])}>
              <Clip $col={2} $bg={C.blue}><ClipArt><MidiDots w={165} h={12} seed={3} /></ClipArt><ClipName>Kelf Drums</ClipName></Clip>
              <Clip $col={4} $bg={C.blue}><ClipArt><MidiDots w={24} h={12} seed={8} /></ClipArt><ClipName>Kelf D</ClipName></Clip>
            </Lane>
            <Lane $h={76} $cols={columns([[239, 320], [357, 383], [427, 587], [587, 611], [615, 693]])}>
              <Clip $col={2} $bg={C.clipGreen} $line="#1d5236"><ClipArt><Vocal peaks={VERSE} w={80} cut={31} /></ClipArt><ClipName $c="#c4ecd0">Heaven Westminster Vocal</ClipName></Clip>
              <Clip $col={4} $bg={C.clipGreen} $line="#b4747a"><ClipArt><Vocal peaks={SHORT} w={26} /></ClipArt><ClipName $c="#dfe" $bg="#0c120e">Heaven</ClipName></Clip>
              <Clip $col={6} $bg={C.clipGreen} $line="#1d5236"><ClipArt><Vocal peaks={LONG.slice(0, 80)} w={160} /></ClipArt><ClipName $c="#c4ecd0">Heaven Lead Vocal 01 The End</ClipName></Clip>
              <Clip $col={8} $bg={C.clipGreen} $line="#1d5236"><ClipArt><Vocal peaks={LONG.slice(80)} w={24} /></ClipArt><ClipName $c="#c4ecd0">Heav</ClipName></Clip>
              <Clip $col={10} $bg={C.clipGreen} $line="#1d5236"><ClipArt><Vocal peaks={VERSE} w={80} cut={31} /></ClipArt><ClipName $c="#c4ecd0">Heaven Westminster Vocal</ClipName></Clip>
            </Lane>
            <AutoLane>
              <Art w={SPAN} h={29}>
                {([[VERSE, 27], [SHORT, 145], [LONG, 215], [VERSE, 402]] as [number[], number][]).map(([pk, x]) => (
                  <polygon key={x} points={wave(pk, 15, 0.42, x)} fill="#878b8d" stroke="#4b5153" strokeWidth="0.6" />
                ))}
                <path d="M58 0v29M433 0v29" stroke="#32393c" />
                <path d="M0 5h28l23 10 46 6h56l62-7 71-8 23 8 15-1h200" fill="none" stroke="#7fb0ae" strokeWidth="0.8" />
                <path d="M28 5h2M50 15h2M97 21h2M152 20h2M214 14h2M285 6h2M308 14h2" stroke="#101517" strokeWidth="2" />
              </Art>
            </AutoLane>
            <Lane $h={86} $bg="linear-gradient(#c8cad6 0 79px, transparent 79px)" $cols={columns([[357, 450], [450, 545]])}>
              <Clip $col={2} $bg="#eef0f8" $line="#707a90">
                <ClipArt><PianoPart w={94} end={94} color="#231a24" alt="#7c1f30" bar="#bf4a48" /></ClipArt>
                <ClipName $bg="#7aa0cc">Paycheck Piano</ClipName>
              </Clip>
              <Clip $col={4} $bg="#d5dae6" $line="#a9b2c4">
                <ClipArt><PianoPart w={95} end={88} color="#d62a4e" alt="#e4607a" bar="#adb0b8" /></ClipArt>
                <ClipName $bg="#7aa0cc">Paycheck Piano</ClipName>
              </Clip>
            </Lane>
            <Lane $h={20} $cols={columns([[263, 404], [404, 451]])}>
              <Clip $col={2} $bg={C.blue}>
                <ClipArt><Art w={141} h={12}><path d="M10 8h6M48 7h5M56 8h8M94 7l8 1h10l8-1h18" stroke="#2c4a78" strokeWidth="0.8" fill="none" /></Art></ClipArt>
                <ClipName>L.A Cousing Bass</ClipName>
              </Clip>
              <Clip $col={4} $bg={C.blue}>
                <ClipArt><Art w={47} h={12}><path d="M3 7h14" stroke="#2c4a78" /><path d="M21 12l2-11 1 11zM26 12l2-11 1 11zM31 12l2-11 2 11zM44 12l1-5 1 5z" fill="#142a4c" stroke="#142a4c" /></Art></ClipArt>
                <ClipName>L.A Cousing Bass</ClipName>
              </Clip>
            </Lane>
            <Lane $h={38} $cols={columns([[451, 733]])}>
              <Clip $col={2} $bg="#7398c6"><ClipArt><BassPart /></ClipArt><ClipName>Paycheck Bass</ClipName></Clip>
            </Lane>
            <HScroll>
              <svg width="50" height="7" viewBox="0 0 50 7" aria-hidden="true">
                <path d="M1 1h4v5H1zM9 1h4v5H9zM18 3.5h30" fill="#dfe3e9" stroke="#4c5966" />
                <path d="M31 1l2 2v3h-4V3z" fill="#394653" />
              </svg>
            </HScroll>
          </Timeline>

          <VScroll aria-hidden="true">
            <Thumb $h={11} $bg="#97a4ae" />
            <Thumb $h={8} $bg="#dfe7ec" />
            <Thumb $h={22} $bg="#66838a" />
            <Thumb $h={12} $bg="#b5ccd6" />
            <Thumb $h={6} $bg="#c9d5dc" />
            <Thumb $h={22} $bg="#8b9da9" />
            <Thumb $h={8} $bg="#dfe7ec" />
            <Thumb $h={126} $bg="#4f6270" />
            <Rest />
            <Thumb $h={8} $bg="#c9d5dc" />
            <Thumb $h={8} $bg="#c9d5dc" />
            <Thumb $h={42} $bg="#8ba3ab" />
          </VScroll>
        </Body>
      </Win>
    </Page>
  );
}
